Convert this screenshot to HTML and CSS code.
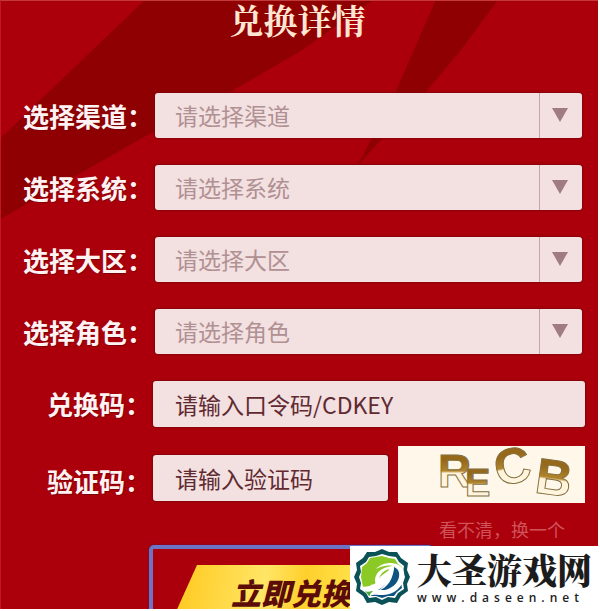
FILE: index.html
```html
<!DOCTYPE html>
<html lang="zh-CN">
<head>
<meta charset="utf-8">
<meta name="viewport" content="width=device-width, initial-scale=1">
<title>兑换详情</title>
<link rel="stylesheet" href="styles.css">
</head>
<body>
<main class="panel">
  <svg class="rays" viewBox="0 0 598 609" preserveAspectRatio="none" aria-hidden="true">
    <path class="ray" d="M143 0L0 137V218L140 138L230 91L300 50L372 0Z"/>
    <path class="ray" d="M435 0L395 92L357 165L380 140L425 92L460 50L497 0Z"/>
  </svg>
  <h1 class="title">兑换详情</h1>
  <form class="form">
    <div class="row">
      <label class="label" for="channel">选择渠道：</label>
      <div class="picker">
        <select class="field select" id="channel"><option>请选择渠道</option></select>
        <svg class="arrow" viewBox="0 0 16 14" aria-hidden="true"><path d="M0 0H16L8 14Z"/></svg>
      </div>
    </div>
    <div class="row">
      <label class="label" for="system">选择系统：</label>
      <div class="picker">
        <select class="field select" id="system"><option>请选择系统</option></select>
        <svg class="arrow" viewBox="0 0 16 14" aria-hidden="true"><path d="M0 0H16L8 14Z"/></svg>
      </div>
    </div>
    <div class="row">
      <label class="label" for="region">选择大区：</label>
      <div class="picker">
        <select class="field select" id="region"><option>请选择大区</option></select>
        <svg class="arrow" viewBox="0 0 16 14" aria-hidden="true"><path d="M0 0H16L8 14Z"/></svg>
      </div>
    </div>
    <div class="row">
      <label class="label" for="role">选择角色：</label>
      <div class="picker">
        <select class="field select" id="role"><option>请选择角色</option></select>
        <svg class="arrow" viewBox="0 0 16 14" aria-hidden="true"><path d="M0 0H16L8 14Z"/></svg>
      </div>
    </div>
    <div class="row row-wide">
      <label class="label" for="code">兑换码：</label>
      <input class="field" id="code" type="text" placeholder="请输入口令码/CDKEY">
    </div>
    <div class="row row-wide row-captcha">
      <label class="label" for="captcha">验证码：</label>
      <div class="captcha">
        <input class="field" id="captcha" type="text" placeholder="请输入验证码">
        <svg class="captcha-image" viewBox="0 0 187 57" role="img" aria-label="验证码图片">
          <defs>
            <linearGradient id="gold" x1="0" y1="0" x2="0" y2="1">
              <stop offset="0.3" stop-color="#96681a"/>
              <stop offset="0.5" stop-color="#b1842c"/>
              <stop offset="0.54" stop-color="#fff3d8"/>
              <stop offset="1" stop-color="#fff8e8"/>
            </linearGradient>
          </defs>
          <rect width="187" height="57" fill="#fff8ea"/>
          <g class="captcha-letters">
            <text x="40" y="41" font-size="46">R</text>
            <text x="67" y="50" font-size="38">E</text>
            <text x="96" y="37" font-size="50" transform="rotate(-12 115 18)">C</text>
            <text x="138" y="49" font-size="50" transform="rotate(8 156 32)">B</text>
          </g>
        </svg>
      </div>
    </div>
    <a class="refresh" href="#captcha">看不清，换一个</a>
    <button class="submit" type="submit">
      <span class="submit-face">立即兑换</span>
    </button>
  </form>
</main>
<aside class="brand">
  <svg class="logo" viewBox="3 3 56 56" aria-hidden="true">
    <path fill="#0b5158" d="M31 3L38 6L46 6L50 12L57 17L56 24L59 31L56 38L57 45L50 50L46 57L38 56L31 59L24 56L16 57L12 50L5 45L6 38L3 31L6 24L5 17L12 12L16 6L24 6Z"/>
    <path fill="#fff" d="M31 8L38 10L45 11L48 16L53 20L52 26L54 31L52 37L53 43L47 47L44 52L37 51L31 54L25 51L18 52L15 47L9 43L10 37L8 31L10 26L9 20L15 16L18 11L25 10Z"/>
    <path fill="#8ac926" d="M31 10L38 12L44 13L47 18L51 21L52 27L44 20L30 30L22 40L12 41L10 31L11 21L16 17L19 12Z"/>
    <path fill="#0e5483" d="M43 20C55 22 52 39 40 45C35 48 28 48 22 47L19 50L25 50L31 52L37 50L43 50L46 46L51 42L50 37L52 31L51 23Z"/>
    <path fill="#0e5483" d="M43 21C53 25 48 41 34 44H27C36 39 42 30 43 21Z"/>
    <path fill="#4ca638" d="M11 42L20 43L23 48L18 50L15 46Z"/>
    <path fill="#fff" d="M25 23C32 15 47 15 52 23C57 34 47 49 32 49C26 49 22 48 19 50C18 47 23 44 29 45C44 45 52 35 49 26C46 18 34 18 25 23Z"/>
    <path fill="#fff" fill-rule="evenodd" d="M43 20C34 20 25 25 24 33C23 39 30 40 35 35C35 39 30 43 26 45C37 43 43 31 43 20ZM38 23C37 30 32 36 29 34C27 31 31 25 38 23Z"/>
    <path fill="#fff" d="M11 41C15 40 16 42 20 39C24 37 27 40 24 43C21 46 16 47 12 44Z"/>
  </svg>
  <div class="brand-text">
    <strong class="brand-name">大圣游戏网</strong>
    <span class="brand-url">www.daseen.net</span>
  </div>
</aside>
</body>
</html>
```

FILE: styles.css
```css
* {
  box-sizing: border-box;
}

body {
  margin: 0;
  position: relative;
  min-height: 100vh;
  display: flex;
  background: #fff;
  font-family: "Noto Sans CJK SC", sans-serif;
}

.panel {
  position: relative;
  flex: 1;
  display: flex;
  flex-direction: column;
  margin: 0 2px 2px 0;
  overflow: hidden;
  background: #ab000b;
  border-top: 1px solid #c23a3c;
  border-left: 1px solid #c01822;
}

.rays {
  position: absolute;
  inset: 0;
  width: 100%;
  height: 100%;
}

.ray {
  fill: #8f0002;
}

.title {
  position: relative;
  margin: 0 4px 44px 0;
  font-family: "Noto Serif CJK SC", "Noto Sans CJK SC", serif;
  font-size: 34px;
  line-height: 38px;
  padding-bottom: 10px;
  font-weight: 700;
  text-align: center;
  color: #ffe6d2;
}

.form {
  position: relative;
  flex: 1;
  display: flex;
  flex-direction: column;
  padding: 0 16px 0 23px;
}

.row {
  display: grid;
  grid-template-columns: 131px 1fr;
  margin-bottom: 27px;
}

.row-wide {
  grid-template-columns: 129px 1fr;
  margin: 0 -3px 19px 0;
}

.row-captcha {
  align-items: end;
  margin-bottom: 16px;
}

.label {
  justify-self: end;
  margin-right: 2px;
  font-size: 26px;
  line-height: 45px;
  height: 45px;
  font-weight: 700;
  white-space: nowrap;
  color: #fff2f2;
  text-shadow: 1px 1px 1px #7d0008;
}

.field {
  display: block;
  width: 100%;
  min-width: 0;
  height: 46px;
  padding: 0 22px;
  border: 0;
  border-radius: 3px;
  background: #f3e0e1;
  box-shadow: 0 0 2px 1px #85000c;
  font-family: inherit;
  font-size: 23px;
  color: #602a30;
}

.field::placeholder {
  color: #602a30;
  opacity: 1;
}

.picker {
  position: relative;
}

.select {
  appearance: none;
  height: 45px;
  padding: 0 20px 2px;
  color: #b09093;
}

.picker::after {
  content: "";
  position: absolute;
  top: 0;
  bottom: 0;
  right: 42px;
  width: 1px;
  background: #c9a3a5;
}

.arrow {
  position: absolute;
  top: 15px;
  right: 14px;
  width: 16px;
  height: 14px;
  fill: #a07b80;
  pointer-events: none;
}

.captcha {
  display: flex;
  align-items: center;
  gap: 10px;
}

.captcha .field {
  flex: 1;
}

.row-captcha .field {
  margin-top: 6px;
}

.captcha-image {
  flex: none;
  width: 187px;
  height: 57px;
}

.captcha-letters {
  fill: url(#gold);
  stroke: #85703f;
  stroke-width: 1;
  font-family: "Liberation Sans", sans-serif;
  font-weight: 700;
}

.refresh {
  align-self: flex-end;
  margin-right: 17px;
  font-size: 18px;
  line-height: 20px;
  text-decoration: none;
  color: #cf5358;
}

.submit {
  flex: 1 0 64px;
  height: 64px;
  width: 284px;
  margin: 6px 0 0 125px;
  padding: 16px 0 0 22px;
  display: flex;
  overflow: hidden;
  border: 4px solid #6d74c4;
  border-bottom: 0;
  border-radius: 5px 5px 0 0;
  background: #ab000b;
  box-shadow: 0 0 2px #401a70;
  font-family: inherit;
}

.submit-face {
  flex: 1;
  height: 60px;
  padding-left: 56px;
  text-align: left;
  background: linear-gradient(100deg, #ffc81c, #ffe566 35%, #ffd02c 50%, #ffe34c 70%, #ffc51c);
  clip-path: polygon(22px 0, 100% 0, 100% 100%, -5px 100%);
  font-size: 30px;
  line-height: 54px;
  font-weight: 900;
  font-style: italic;
  color: #5c0c08;
}

.brand {
  position: absolute;
  right: 0;
  bottom: 0;
  width: 250px;
  height: 65px;
  padding: 3px 0 0 4px;
  display: flex;
  gap: 7px;
  background: #fff;
}

.logo {
  flex: none;
  width: 56px;
  height: 56px;
}

.brand-text {
  display: flex;
  flex-direction: column;
}

.brand-name {
  font-family: "Noto Serif CJK SC", "Noto Sans CJK SC", serif;
  font-size: 35px;
  line-height: 40px;
  font-weight: 900;
  color: #1c1c1c;
}

.brand-url {
  font-family: "Open Sans", sans-serif;
  font-size: 12px;
  font-weight: 600;
  line-height: 18px;
  letter-spacing: 5px;
  color: #222;
}
```
